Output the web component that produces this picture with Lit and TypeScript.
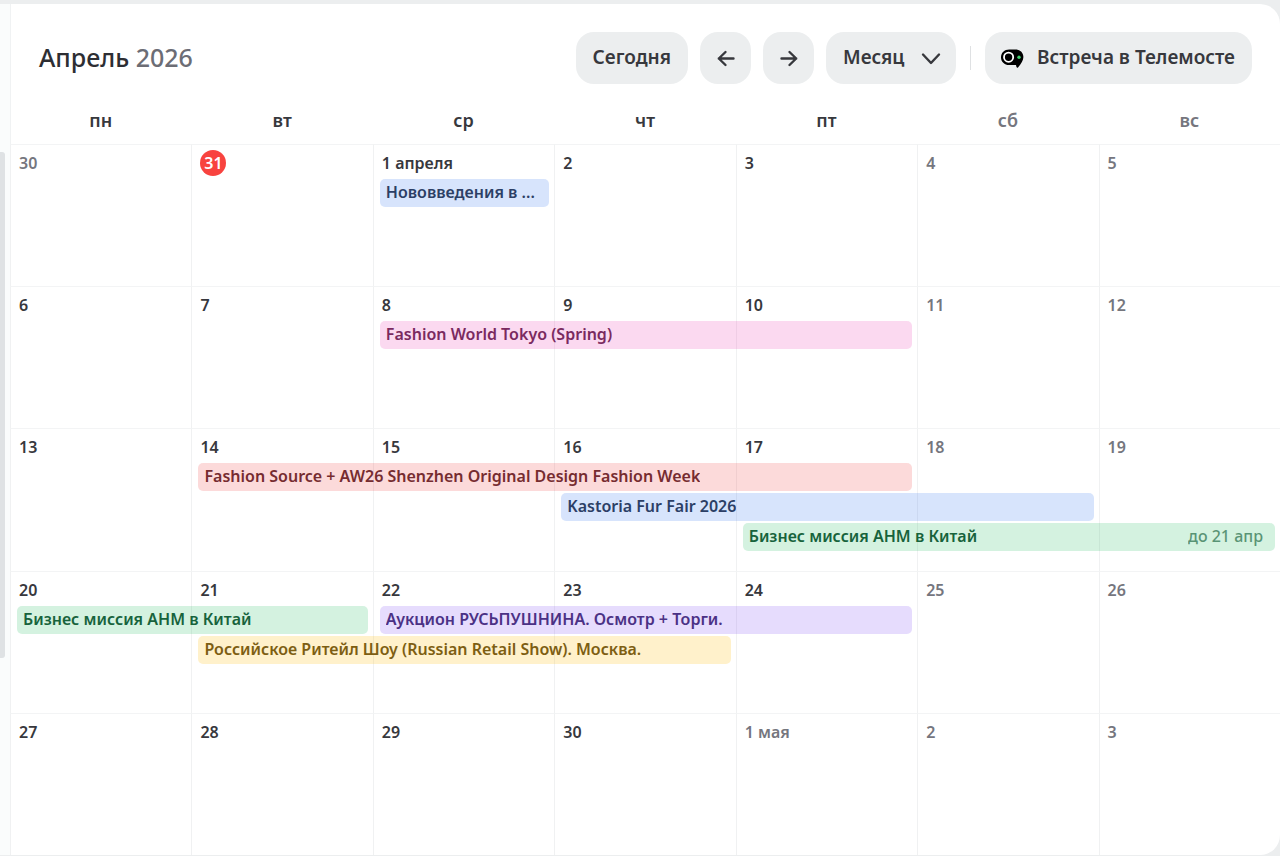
import { LitElement, html, css, svg, nothing } from "lit";
import { customElement, property } from "lit/decorators.js";
import { classMap } from "lit/directives/class-map.js";
import { styleMap } from "lit/directives/style-map.js";

interface Day {
  label: string;
  muted?: boolean;
  today?: boolean;
}

interface CalendarEvent {
  title: string;
  color: "blue" | "pink" | "red" | "green" | "violet" | "yellow";
  start: number;
  span: number;
  lane: number;
  until?: string;
}

interface Week {
  days: Day[];
  events: CalendarEvent[];
}

const weekdays = ["пн", "вт", "ср", "чт", "пт", "сб", "вс"];

const day = (label: string, muted = false): Day => ({ label, muted });

const weeks: Week[] = [
  {
    days: [
      day("30", true),
      { label: "31", today: true },
      day("1 апреля"),
      day("2"),
      day("3"),
      day("4", true),
      day("5", true),
    ],
    events: [{ title: "Нововведения в ...", color: "blue", start: 3, span: 1, lane: 1 }],
  },
  {
    days: [day("6"), day("7"), day("8"), day("9"), day("10"), day("11", true), day("12", true)],
    events: [{ title: "Fashion World Tokyo (Spring)", color: "pink", start: 3, span: 3, lane: 1 }],
  },
  {
    days: [day("13"), day("14"), day("15"), day("16"), day("17"), day("18", true), day("19", true)],
    events: [
      {
        title: "Fashion Source + AW26 Shenzhen Original Design Fashion Week",
        color: "red",
        start: 2,
        span: 4,
        lane: 1,
      },
      { title: "Kastoria Fur Fair 2026", color: "blue", start: 4, span: 3, lane: 2 },
      { title: "Бизнес миссия АНМ в Китай", color: "green", start: 5, span: 3, lane: 3, until: "до 21 апр" },
    ],
  },
  {
    days: [day("20"), day("21"), day("22"), day("23"), day("24"), day("25", true), day("26", true)],
    events: [
      { title: "Бизнес миссия АНМ в Китай", color: "green", start: 1, span: 2, lane: 1 },
      { title: "Аукцион РУСЬПУШНИНА. Осмотр + Торги.", color: "violet", start: 3, span: 3, lane: 1 },
      {
        title: "Российское Ритейл Шоу (Russian Retail Show). Москва.",
        color: "yellow",
        start: 2,
        span: 3,
        lane: 2,
      },
    ],
  },
  {
    days: [day("27"), day("28"), day("29"), day("30"), day("1 мая", true), day("2", true), day("3", true)],
    events: [],
  },
];

const arrow = (d: string) => html`
  <svg class="icon" width="20" height="20" viewBox="0 0 20 20" aria-hidden="true">
    ${svg`<path d=${d} fill="none" stroke="currentColor" stroke-width="2.4" stroke-linecap="round" stroke-linejoin="round"></path>`}
  </svg>
`;

@customElement("calendar-toolbar")
export class CalendarToolbar extends LitElement {
  static styles = css`
    :host {
      display: flex;
      align-items: center;
      justify-content: space-between;
      padding: 28px 28px 0 29px;
      color: #37383d;
    }
    .title {
      margin: 0;
      font-size: 25px;
      font-weight: 500;
      line-height: 50px;
      padding-bottom: 2px;
      color: #2d2e33;
    }
    .year {
      color: #6c6d75;
    }
    .controls {
      display: flex;
      align-items: center;
      gap: 12px;
    }
    .control {
      box-sizing: border-box;
      display: flex;
      align-items: center;
      height: 52px;
      padding: 0 17px 2px;
      border: 0;
      border-radius: 18px;
      background: #eceeef;
      color: inherit;
      font: inherit;
      font-size: 19px;
      font-weight: 600;
      cursor: pointer;
    }
    .square {
      justify-content: center;
      width: 51px;
      padding: 0;
    }
    .icon {
      display: block;
    }
    .picker {
      position: relative;
      display: flex;
      align-items: center;
    }
    .view {
      appearance: none;
      padding-right: 51px;
    }
    .chevron {
      position: absolute;
      right: 15px;
      pointer-events: none;
    }
    .divider {
      width: 1px;
      height: 24px;
      margin: 0 2px;
      background: #dfe1e3;
    }
    .meeting {
      gap: 13px;
      padding-left: 15px;
    }
  `;

  render() {
    return html`
      <h1 class="title">Апрель <span class="year">2026</span></h1>
      <div class="controls">
        <button class="control" type="button">Сегодня</button>
        <button class="control square" type="button" aria-label="Назад">
          ${arrow("M17.5 10.5H2.8M9.5 4L2.8 10.5L9.5 17")}
        </button>
        <button class="control square" type="button" aria-label="Вперёд">
          ${arrow("M2.5 10.5H17.2M10.5 4L17.2 10.5L10.5 17")}
        </button>
        <div class="picker">
          <select class="control view" aria-label="Вид календаря">
            <option>Месяц</option>
          </select>
          <svg class="chevron" width="20" height="20" viewBox="0 0 20 20" aria-hidden="true">
            <path
              d="M2 6.5L10 15L18 6.5"
              fill="none"
              stroke="currentColor"
              stroke-width="2.4"
              stroke-linecap="round"
              stroke-linejoin="round"
            ></path>
          </svg>
        </div>
        <span class="divider"></span>
        <button class="control meeting" type="button">
          <svg class="icon" width="24" height="22" viewBox="0 0 24 22" aria-hidden="true">
            <path
              d="M9.2 3.4H15.2C20.2 3.4 23.4 6.6 23.4 11C23.4 14.6 21.2 17.6 18 21.4C17.3 22 16.5 21.7 16.3 20.6L16 19H9.2C4.4 19 1 15.8 1 11.2C1 6.6 4.4 3.4 9.2 3.4Z"
              fill="#000"
            ></path>
            <circle cx="8.6" cy="11.2" r="4.6" fill="none" stroke="#fff" stroke-width="1.8"></circle>
            <circle cx="19" cy="11.2" r="1.7" fill="#3fd06c"></circle>
          </svg>
          Встреча в Телемосте
        </button>
      </div>
    `;
  }
}

@customElement("calendar-week")
export class CalendarWeek extends LitElement {
  @property({ attribute: false }) week!: Week;

  static styles = css`
    :host {
      display: grid;
      grid-template-columns: repeat(7, minmax(0, 1fr));
      grid-template-rows: 33px repeat(3, 28px) 1fr;
      row-gap: 2px;
    }
    .day {
      grid-row: 1 / -1;
      box-sizing: border-box;
      padding: 5px 8px;
      border-top: 1px solid #f3f4f5;
      border-left: 1px solid #f0f1f2;
      font-size: 16px;
      line-height: 26px;
      font-weight: 600;
      color: #37383d;
    }
    .muted {
      color: #75767e;
    }
    .today {
      display: inline-block;
      width: 26px;
      height: 26px;
      border-radius: 50%;
      background: #f8433f;
      color: #fff;
      line-height: 26px;
      text-align: center;
    }
    .event {
      display: flex;
      align-items: center;
      justify-content: space-between;
      gap: 12px;
      min-width: 0;
      margin: 0 5px 0 7px;
      padding: 0 12px 2px 6px;
      border: 0;
      border-radius: 5px;
      font: inherit;
      font-size: 16px;
      font-weight: 600;
      line-height: 26px;
      text-align: left;
      cursor: pointer;
    }
    .name {
      overflow: hidden;
      white-space: nowrap;
      text-overflow: ellipsis;
    }
    .until {
      flex: none;
      font-weight: 500;
      opacity: 0.65;
    }
    .blue {
      background: rgba(56, 122, 240, 0.2);
      color: #2c3f66;
    }
    .pink {
      background: rgba(236, 66, 178, 0.2);
      color: #7a2a5f;
    }
    .red {
      background: rgba(240, 70, 70, 0.2);
      color: #762c30;
    }
    .green {
      background: rgba(42, 192, 100, 0.2);
      color: #17633c;
    }
    .violet {
      background: rgba(132, 82, 244, 0.2);
      color: #4b3185;
    }
    .yellow {
      background: rgba(255, 192, 20, 0.22);
      color: #7d5e12;
    }
  `;

  render() {
    return html`
      ${this.week.days.map(
        (d, i) => html`
          <div class=${classMap({ day: true, muted: !!d.muted })} style=${styleMap({ gridColumn: String(i + 1) })}>
            <span class=${classMap({ today: !!d.today })}>${d.label}</span>
          </div>
        `,
      )}
      ${this.week.events.map(
        (e) => html`
          <button
            type="button"
            class=${classMap({ event: true, [e.color]: true })}
            style=${styleMap({ gridColumn: `${e.start} / span ${e.span}`, gridRow: String(e.lane + 1) })}
          >
            <span class="name">${e.title}</span>
            ${e.until ? html`<span class="until">${e.until}</span>` : nothing}
          </button>
        `,
      )}
    `;
  }
}

@customElement("app-root")
export class AppRoot extends LitElement {
  static styles = css`
    :host {
      box-sizing: border-box;
      display: flex;
      min-height: 100vh;
      padding: 4px 0 1px;
      background: #eceeef;
      font-family: "Noto Sans", "Open Sans", sans-serif;
    }
    .rail {
      flex: none;
      width: 10px;
      padding-top: 148px;
      box-sizing: border-box;
      background: #fafcfc;
    }
    .thumb {
      width: 5px;
      height: 506px;
      border-radius: 0 3px 3px 0;
      background: #dfe2e4;
    }
    .panel {
      flex: 1;
      min-width: 0;
      display: flex;
      flex-direction: column;
      border-radius: 0 20px 20px 0;
      background: #fff;
      box-shadow: inset 1px 0 #f0f2f3;
      overflow: hidden;
    }
    .weekdays {
      display: grid;
      grid-template-columns: repeat(7, minmax(0, 1fr));
      padding: 20px 0 8px;
      font-size: 18px;
      font-weight: 600;
      line-height: 32px;
      text-align: center;
      color: #37383d;
    }
    .weekend {
      color: #75767e;
    }
    .weeks {
      flex: 1;
      display: grid;
      grid-auto-rows: minmax(132px, 1fr);
    }
  `;

  render() {
    return html`
      <div class="rail"><div class="thumb"></div></div>
      <main class="panel">
        <calendar-toolbar></calendar-toolbar>
        <div class="weekdays">
          ${weekdays.map((name, i) => html`<span class=${classMap({ weekend: i > 4 })}>${name}</span>`)}
        </div>
        <div class="weeks">${weeks.map((week) => html`<calendar-week .week=${week}></calendar-week>`)}</div>
      </main>
    `;
  }
}
